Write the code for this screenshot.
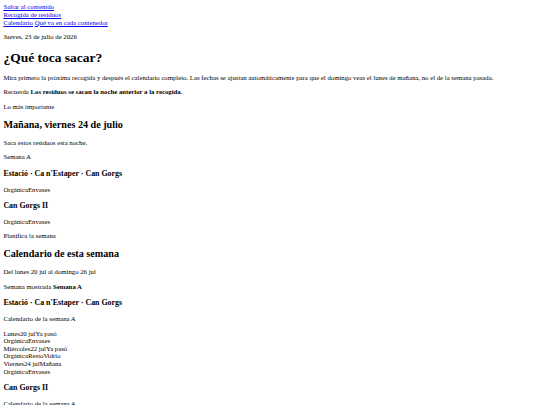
export default function App() {
  const link = "text-[#0000ee] underline";
  const p = "my-[6.75px]";
  const h2 = "text-[10.13px] leading-[1.15] font-bold my-[8.4px]";
  const h3 = "text-[7.9px] leading-[1.15] font-bold my-[7.9px]";

  return (
    <div className="m-[3.375px] font-['Liberation_Serif',serif] text-[6.75px] leading-[7.6px] text-black">
      <a href="#main" className={link}>
        Saltar al contenido
      </a>
      <header>
        <div>
          <a href="#" className={link}>
            Recogida de residuos
          </a>
        </div>
        <nav>
          <a href="#" className={link}>
            Calendario
          </a>{" "}
          <a href="#" className={link}>
            Qué va en cada contenedor
          </a>
        </nav>
      </header>

      <main id="main">
        <p className={p}>Jueves, 23 de julio de 2026</p>
        <h1 className="text-[13.5px] leading-[1.15] font-bold my-[9.05px]">¿Qué toca sacar?</h1>
        <p className={p}>
          Mira primero la próxima recogida y después el calendario completo. Las fechas se ajustan automáticamente para que el domingo veas el lunes de mañana, no el de la semana pasada.
        </p>
        <p className={p}>
          Recuerda <strong className="font-bold">Los residuos se sacan la noche anterior a la recogida.</strong>
        </p>

        <section>
          <p className={p}>Lo más importante</p>
          <h2 className={h2}>Mañana, viernes 24 de julio</h2>
          <p className={p}>Saca estos residuos esta noche.</p>
          <p className={p}>Semana A</p>
          <h3 className={h3}>Estació · Ca n'Estaper · Can Gorgs</h3>
          <p className={p}>
            <span>Orgánica</span>
            <span>Envases</span>
          </p>
          <h3 className={h3}>Can Gorgs II</h3>
          <p className={p}>
            <span>Orgánica</span>
            <span>Envases</span>
          </p>
        </section>

        <section>
          <p className={p}>Planifica la semana</p>
          <h2 className={h2}>Calendario de esta semana</h2>
          <p className={p}>Del lunes 20 jul al domingo 26 jul</p>
          <p className={p}>
            Semana mostrada <strong className="font-bold">Semana A</strong>
          </p>

          <h3 className={h3}>Estació · Ca n'Estaper · Can Gorgs</h3>
          <p className={p}>Calendario de la semana A</p>
          <div className={p}>
            <div>
              <span>Lunes</span>
              <span>20 jul</span>
              <span>Ya pasó</span>
            </div>
            <div>
              <span>Orgánica</span>
              <span>Envases</span>
            </div>
            <div>
              <span>Miércoles</span>
              <span>22 jul</span>
              <span>Ya pasó</span>
            </div>
            <div>
              <span>Orgánica</span>
              <span>Resto</span>
              <span>Vidrio</span>
            </div>
            <div>
              <span>Viernes</span>
              <span>24 jul</span>
              <span>Mañana</span>
            </div>
            <div>
              <span>Orgánica</span>
              <span>Envases</span>
            </div>
          </div>

          <h3 className={h3}>Can Gorgs II</h3>
          <p className={p}>Calendario de la semana A</p>
          <div className={p}>
            <div>
              <span>Lunes</span>
              <span>20 jul</span>
              <span>Ya pasó</span>
            </div>
            <div>
              <span>Orgánica</span>
              <span>Envases</span>
            </div>
          </div>
        </section>
      </main>
    </div>
  );
}
